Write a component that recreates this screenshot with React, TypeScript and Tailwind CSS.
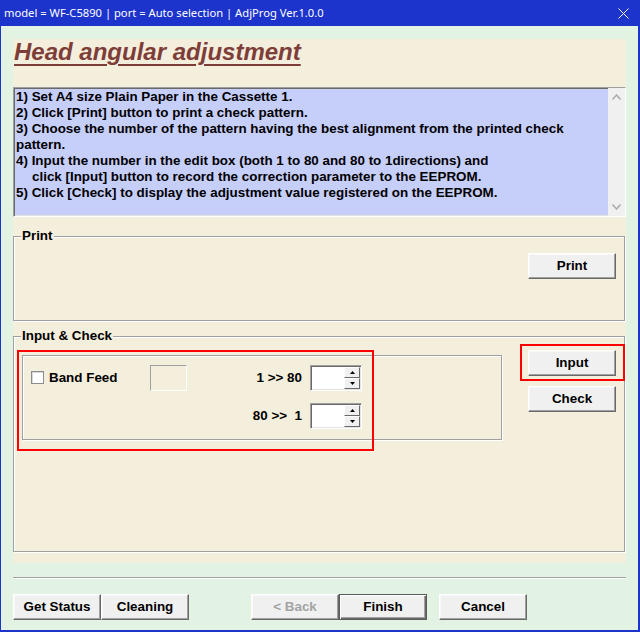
import React from 'react';

const FONT = "font-['Liberation_Sans',Arial,sans-serif]";

const RAISED =
  'border border-t-white border-l-white border-r-[#696969] border-b-[#696969] bg-[#f0f0f0] shadow-[inset_-1px_-1px_0_#a0a0a0,inset_1px_1px_0_#f8f8f8]';
const DEFAULT_BTN =
  'border border-[#5a5a5a] bg-[#f0f0f0] shadow-[inset_1px_1px_0_#fff,inset_-1px_-1px_0_#696969,inset_-2px_-2px_0_#a0a0a0]';
const SUNKEN =
  'border border-t-[#a0a0a0] border-l-[#a0a0a0] border-r-white border-b-white shadow-[inset_1px_1px_0_#696969,inset_-1px_-1px_0_#e3e3e3]';

interface BtnProps {
  label: string;
  isDefault?: boolean;
  disabled?: boolean;
}

const Btn: React.FC<BtnProps> = ({ label, isDefault, disabled }) => (
  <button
    className={`flex h-[26px] w-[88px] items-center justify-center text-[13.4px] font-bold leading-none ${
      isDefault ? DEFAULT_BTN : RAISED
    } ${disabled ? 'text-[#a3a3a3]' : 'text-black'}`}
  >
    {label}
  </button>
);

const SpinArrow: React.FC<{ up?: boolean }> = ({ up }) => (
  <div className={`flex flex-1 items-center justify-center ${RAISED} shadow-none`}>
    <svg width="5" height="3" viewBox="0 0 5 3">
      {up ? <polygon points="2.5,0 5,3 0,3" fill="#000" /> : <polygon points="0,0 5,0 2.5,3" fill="#000" />}
    </svg>
  </div>
);

const Spin = () => (
  <div className={`flex h-[26px] w-[52px] bg-white p-[1px] ${SUNKEN}`}>
    <div className="flex-1" />
    <div className="flex w-[16px] flex-col">
      <SpinArrow up />
      <SpinArrow />
    </div>
  </div>
);

const GroupBox: React.FC<{ title: string; className?: string; children: React.ReactNode }> = ({
  title,
  className,
  children,
}) => (
  <div className={`w-[612px] border border-[#a0a0a0] shadow-[1px_1px_0_#fff,inset_1px_1px_0_#fff] ${className ?? ''}`}>
    <div className="-mt-[9px] ml-[7px] w-fit bg-[#f4eedc] px-[1px] text-[13.4px] font-bold leading-[16px] text-black">
      {title}
    </div>
    {children}
  </div>
);

const lines = [
  '1) Set A4 size Plain Paper in the Cassette 1.',
  '2) Click [Print] button to print a check pattern.',
  '3) Choose the number of the pattern having the best alignment from the printed check',
  'pattern.',
  '4) Input the number in the edit box (both 1 to 80 and 80 to 1directions) and',
];

export default function App() {
  return (
    <div className={`flex h-[632px] w-[640px] flex-col bg-[#1c33cc] pl-[1px] pr-[2px] pb-[2px] ${FONT}`}>
      {/* title bar */}
      <div className="flex h-[26px] items-center justify-between pl-[3px] pr-[9px]">
        <span className="font-['Noto_Sans',sans-serif] text-[11.2px] text-white">
          model = WF-C5890 | port = Auto selection | AdjProg Ver.1.0.0
        </span>
        <svg width="11" height="11" viewBox="0 0 11 11">
          <path d="M0.5 0.5 L10.5 10.5 M10.5 0.5 L0.5 10.5" stroke="#fff" strokeWidth="1" />
        </svg>
      </div>

      {/* client */}
      <div className="flex flex-1 flex-col bg-[#e2f2e3] pl-[12px]">
        <div className="mt-[13px] flex h-[524px] w-[613px] flex-col bg-[#f4eedc] pt-[1px] pb-[11px]">
          <h1 className="pl-[1px] text-[24px] font-bold italic leading-[24px] text-[#7e3d38] underline decoration-[2px] underline-offset-[4px]">
            Head angular adjustment
          </h1>

          {/* instructions */}
          <div className={`mt-[23px] flex h-[130px] bg-[#c6cefa] ${SUNKEN}`}>
            <div className="flex-1 pl-[2px] pt-[1px] text-[13.4px] font-bold leading-[16px] text-black">
              {lines.map((l) => (
                <div key={l} className="whitespace-nowrap">
                  {l}
                </div>
              ))}
              <div className="whitespace-nowrap pl-[16px]">
                click [Input] button to record the correction parameter to the EEPROM.
              </div>
              <div className="whitespace-nowrap">5) Click [Check] to display the adjustment value registered on the EEPROM.</div>
            </div>
            <div className="flex w-[17px] flex-col items-center justify-between bg-[#f0f0f0] py-[6px]">
              <svg width="9" height="6" viewBox="0 0 9 6">
                <polyline points="0.5,5.5 4.5,1 8.5,5.5" fill="none" stroke="#a6a6a6" strokeWidth="1.4" />
              </svg>
              <svg width="9" height="6" viewBox="0 0 9 6">
                <polyline points="0.5,0.5 4.5,5 8.5,0.5" fill="none" stroke="#a6a6a6" strokeWidth="1.4" />
              </svg>
            </div>
          </div>

          {/* Print group */}
          <GroupBox title="Print" className="mt-[19px]">
            <div className="flex h-[76px] justify-end pr-[8px] pt-[9px]">
              <Btn label="Print" />
            </div>
          </GroupBox>

          {/* Input & Check group */}
          <GroupBox title="Input & Check" className="mt-[15px]">
            <div className="relative flex h-[207px] items-start">
              <div className="ml-[8px] mt-[11px] flex h-[85px] w-[480px] flex-col border border-[#a0a0a0] pt-[9px] shadow-[1px_1px_0_#fff,inset_1px_1px_0_#fff] text-[13.4px] font-bold text-black">
                <div className="flex h-[26px] items-center">
                  <div className="flex w-[127px] items-center pl-[8px]">
                    <div className="h-[13px] w-[13px] border border-[#8c8c8c] bg-white shadow-[inset_1px_1px_0_#d8d8d8]" />
                    <span className="ml-[5px]">Band Feed</span>
                  </div>
                  <div className="h-[26px] w-[37px] border border-t-[#a0a0a0] border-l-[#a0a0a0] border-r-white border-b-white" />
                  <div className="w-[115px] whitespace-pre text-right">1 &gt;&gt; 80</div>
                  <div className="ml-[8px]">
                    <Spin />
                  </div>
                </div>
                <div className="mt-[12px] flex h-[26px] items-center">
                  <div className="w-[164px]" />
                  <div className="w-[115px] whitespace-pre text-right">{'80 >>  1'}</div>
                  <div className="ml-[8px]">
                    <Spin />
                  </div>
                </div>
              </div>

              <div className="ml-[26px] mt-[6px] flex flex-col gap-[10px]">
                <Btn label="Input" />
                <Btn label="Check" />
              </div>

              {/* red highlight marks */}
              <div className="absolute left-[3px] top-[6px] h-[101px] w-[357px] border-2 border-[#ff0000]" />
              <div className="absolute left-[506px] top-0 h-[37px] w-[105px] border-2 border-[#ff0000]" />
            </div>
          </GroupBox>
        </div>

        {/* separator */}
        <div className="mt-[14px] h-[2px] w-[613px] border-t border-t-[#a0a0a0] border-b border-b-white" />

        {/* bottom buttons */}
        <div className="mt-[15px] flex">
          <Btn label="Get Status" />
          <Btn label="Cleaning" />
          <div className="ml-[62px] flex">
            <Btn label="< Back" disabled />
            <Btn label="Finish" isDefault />
          </div>
          <div className="ml-[12px]">
            <Btn label="Cancel" />
          </div>
        </div>
      </div>
    </div>
  );
}
